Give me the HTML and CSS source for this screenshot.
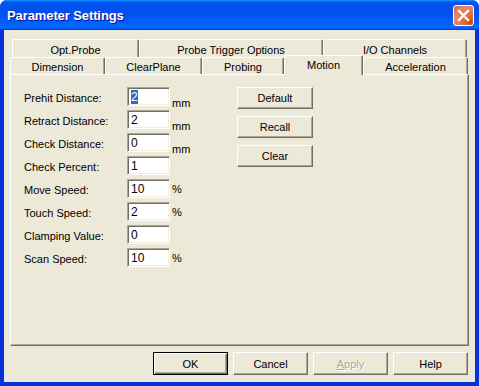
FILE: index.html
```html
<!DOCTYPE html>
<html lang="en">
<head>
  <meta charset="UTF-8" />
  <title>Parameter Settings</title>
  <link rel="stylesheet" href="styles.css">
</head>
<body>
  <div class="window">
    <div class="titlebar">
      <span class="title">Parameter Settings</span>
      <button class="close-btn" aria-label="Close">
        <svg width="13" height="13" viewBox="0 0 13 13">
          <path d="M2 2 L11 11 M11 2 L2 11" stroke="#fff" stroke-width="2.4" stroke-linecap="square" fill="none"/>
        </svg>
      </button>
    </div>

    <div class="dialog">
      <div class="tabs">
        <div class="tab-row row-back">
          <div class="tab w-opt">Opt.Probe</div>
          <div class="tab w-trigger">Probe Trigger Options</div>
          <div class="tab w-io">I/O Channels</div>
        </div>
        <div class="tab-row row-front">
          <div class="tab w-dim">Dimension</div>
          <div class="tab w-clear">ClearPlane</div>
          <div class="tab w-probing">Probing</div>
          <div class="tab w-motion active">Motion</div>
          <div class="tab w-accel">Acceleration</div>
        </div>
      </div>

      <div class="panel">
        <div class="fields">
          <label>Prehit Distance:</label>
          <div class="field"><span class="sel">2</span></div>
          <span class="unit mm">mm</span>

          <label>Retract Distance:</label>
          <div class="field">2</div>
          <span class="unit mm">mm</span>

          <label>Check Distance:</label>
          <div class="field">0</div>
          <span class="unit mm">mm</span>

          <label>Check Percent:</label>
          <div class="field">1</div>
          <span class="unit"></span>

          <label>Move Speed:</label>
          <div class="field">10</div>
          <span class="unit pct">%</span>

          <label>Touch Speed:</label>
          <div class="field">2</div>
          <span class="unit pct">%</span>

          <label>Clamping Value:</label>
          <div class="field">0</div>
          <span class="unit"></span>

          <label>Scan Speed:</label>
          <div class="field">10</div>
          <span class="unit pct">%</span>
        </div>

        <div class="side-buttons">
          <button class="btn side">Default</button>
          <button class="btn side">Recall</button>
          <button class="btn side">Clear</button>
        </div>
      </div>

      <div class="dialog-buttons">
        <button class="btn default">OK</button>
        <button class="btn">Cancel</button>
        <button class="btn disabled"><u>A</u>pply</button>
        <button class="btn">Help</button>
      </div>
    </div>
  </div>
</body>
</html>
```

FILE: styles.css
```css
body {
  margin: 0;
  padding: 0;
  background: #fff;
  font-family: 'Liberation Sans', Arial, sans-serif;
  font-size: 11px;
  color: #000;
}

.window {
  width: 479px;
  height: 386px;
  box-sizing: border-box;
  display: flex;
  flex-direction: column;
  background: #0831d9;
  border-radius: 7px 7px 0 0;
  overflow: hidden;
}

.titlebar {
  height: 30px;
  flex: none;
  display: flex;
  align-items: center;
  justify-content: space-between;
  padding: 0 5px 0 7px;
  background: linear-gradient(180deg, #0997ff, #0053ee 8%, #0050ee 40%, #06f 88%, #06f 93%, #005bff 95%, #003dd7 96%, #003dd7);
}

.title {
  color: #fff;
  font-weight: bold;
  font-size: 13px;
  letter-spacing: -0.1px;
  text-shadow: 1px 1px #0f1089;
  padding-top: 1px;
}

.close-btn {
  width: 21px;
  height: 21px;
  padding: 0;
  margin-top: 1px;
  border: 1px solid #fff;
  border-radius: 3px;
  display: flex;
  align-items: center;
  justify-content: center;
  background: radial-gradient(circle at 85% 85%, #cc4600 0%, #dc6527 20%, #e17e55 50%, #e6876a 70%, #d25b3b 100%);
}

.dialog {
  flex: 1;
  margin: 0 4px 4px;
  background: #ece9d8;
  padding: 9px 7px 7px 6px;
  display: flex;
  flex-direction: column;
}

.tabs {
  display: flex;
  flex-direction: column;
}

.tab-row {
  display: flex;
}

.row-back {
  height: 18px;
  padding-left: 2px;
}

.row-front {
  height: 17px;
}

.tab {
  box-sizing: border-box;
  height: 100%;
  display: flex;
  align-items: center;
  justify-content: center;
  background: #ece9d8;
  border-top: 1px solid #fff;
  border-left: 1px solid #fff;
  border-right: 1px solid #716f64;
  box-shadow: inset -1px 0 #aca899;
  border-radius: 2px 2px 0 0;
  padding-top: 1px;
}

.row-back .tab {
  height: 19px;
}

.tab.active {
  position: relative;
  z-index: 1;
  height: 20px;
  margin-top: -2px;
  padding-bottom: 3px;
}

.w-opt { width: 127px; }
.w-trigger { width: 184px; }
.w-io { width: 144px; }
.w-dim { width: 95px; }
.w-clear { width: 97px; }
.w-probing { width: 82px; }
.w-motion { width: 79px; }
.w-accel { width: 105px; }

.panel {
  width: 459px;
  height: 272px;
  box-sizing: border-box;
  border-top: 1px solid #fff;
  border-left: 1px solid #fff;
  border-right: 1px solid #716f64;
  border-bottom: 1px solid #716f64;
  box-shadow: inset -1px -1px #aca899;
  display: flex;
  align-items: flex-start;
  padding: 12px 0 0 13px;
}

.fields {
  display: grid;
  grid-template-columns: 103px 43px 67px;
  grid-auto-rows: 19px;
  row-gap: 4px;
}

.fields label {
  display: flex;
  align-items: center;
  padding-top: 2px;
}

.field {
  box-sizing: border-box;
  background: #fff;
  border-top: 1px solid #aca899;
  border-left: 1px solid #aca899;
  border-right: 1px solid #fff;
  border-bottom: 1px solid #fff;
  box-shadow: inset 1px 1px #716f64, inset -1px -1px #f1efe2;
  padding: 2px 0 0 3px;
  font-size: 12px;
  line-height: 14px;
}

.sel {
  background: #316ac5;
  color: #fff;
}

.unit {
  padding-left: 2px;
}

.unit.mm {
  padding-top: 10px;
}

.unit.pct {
  padding-top: 4px;
}

.side-buttons {
  display: flex;
  flex-direction: column;
  gap: 7px;
}

.btn {
  box-sizing: border-box;
  width: 75px;
  height: 23px;
  padding: 0;
  background: #ece9d8;
  font-family: 'Liberation Sans', Arial, sans-serif;
  font-size: 11px;
  color: #000;
  border-top: 1px solid #fff;
  border-left: 1px solid #fff;
  border-right: 1px solid #716f64;
  border-bottom: 1px solid #716f64;
  box-shadow: inset -1px -1px #aca899;
}

.btn.side {
  width: 76px;
  height: 22px;
}

.btn.default {
  border: 1px solid #000;
  box-shadow: inset 1px 1px #fff, inset -1px -1px #716f64, inset -2px -2px #aca899;
}

.btn.disabled {
  color: #aca899;
  text-shadow: 1px 1px #fff;
}

.dialog-buttons {
  display: flex;
  justify-content: flex-end;
  gap: 5px;
  margin-top: 6px;
}
```
